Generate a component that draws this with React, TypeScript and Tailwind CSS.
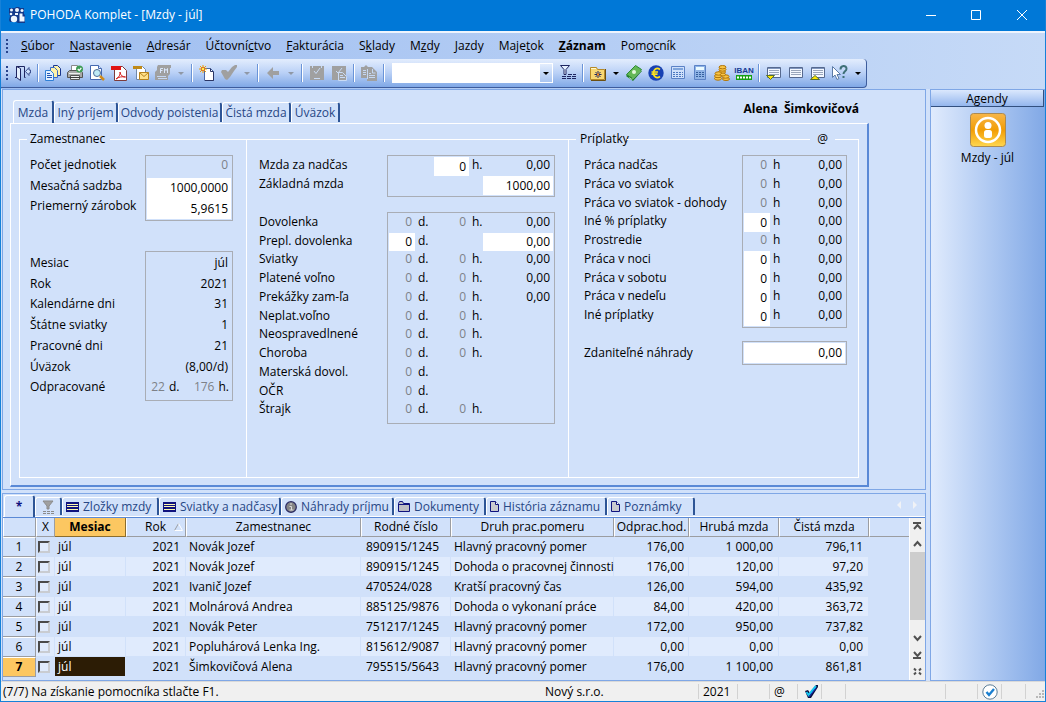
import { useState, type ReactNode } from "react";
import clsx from "clsx";

/* ---------- data ---------- */

const MENU = [
  { pre: "", key: "S", post: "úbor" },
  { pre: "", key: "N", post: "astavenie" },
  { pre: "", key: "A", post: "dresár" },
  { pre: "Účtovní", key: "c", post: "tvo" },
  { pre: "", key: "F", post: "akturácia" },
  { pre: "S", key: "k", post: "lady" },
  { pre: "M", key: "z", post: "dy" },
  { pre: "", key: "J", post: "azdy" },
  { pre: "Maje", key: "t", post: "ok" },
  { pre: "", key: "Z", post: "áznam", bold: true },
  { pre: "Pom", key: "o", post: "cník" },
];

const FORM_TABS = [
  { label: "Iný príjem", width: "w-[64px]" },
  { label: "Odvody poistenia", width: "w-[104px]" },
  { label: "Čistá mzda", width: "w-[69px]" },
  { label: "Úväzok", width: "w-[49px]" },
];

const MONTH_INFO = [
  ["Mesiac", "júl"],
  ["Rok", "2021"],
  ["Kalendárne dni", "31"],
  ["Štátne sviatky", "1"],
  ["Pracovné dni", "21"],
  ["Úväzok", "(8,00/d)"],
];

const ABSENCES = [
  { id: "dovolenka", label: "Dovolenka", hours: true, amount: true },
  { id: "prepl", label: "Prepl. dovolenka", editable: true, amount: true },
  { id: "sviatky", label: "Sviatky", hours: true, amount: true },
  { id: "platene", label: "Platené voľno", hours: true, amount: true },
  { id: "prekazky", label: "Prekážky zam-ľa", hours: true, amount: true },
  { id: "neplat", label: "Neplat.voľno", hours: true },
  { id: "neosprav", label: "Neospravedlnené", hours: true },
  { id: "choroba", label: "Choroba", hours: true },
  { id: "materska", label: "Materská dovol." },
  { id: "ocr", label: "OČR" },
  { id: "strajk", label: "Štrajk", hours: true },
];

const BONUSES = [
  { id: "nadcas", label: "Práca nadčas" },
  { id: "sviatok", label: "Práca vo sviatok" },
  { id: "dohody", label: "Práca vo sviatok - dohody" },
  { id: "percent", label: "Iné % príplatky", editable: true },
  { id: "prostredie", label: "Prostredie" },
  { id: "noc", label: "Práca v noci", editable: true },
  { id: "sobota", label: "Práca v sobotu", editable: true },
  { id: "nedela", label: "Práca v nedeľu", editable: true },
  { id: "ine", label: "Iné príplatky", editable: true },
];

const ROWS = [
  ["Novák Jozef", "890915/1245", "Hlavný pracovný pomer", "176,00", "1 000,00", "796,11"],
  ["Novák Jozef", "890915/1245", "Dohoda o pracovnej činnosti", "176,00", "120,00", "97,20"],
  ["Ivanič Jozef", "470524/028", "Kratší pracovný čas", "126,00", "594,00", "435,92"],
  ["Molnárová Andrea", "885125/9876", "Dohoda o vykonaní práce", "84,00", "420,00", "363,72"],
  ["Novák Peter", "751217/1245", "Hlavný pracovný pomer", "172,00", "950,00", "737,82"],
  ["Popluhárová Lenka Ing.", "815612/9087", "Hlavný pracovný pomer", "0,00", "0,00", "0,00"],
  ["Šimkovičová Alena", "795515/5643", "Hlavný pracovný pomer", "176,00", "1 100,00", "861,81"],
];

/* ---------- toolbar icons ---------- */

function Svg({ children }: { children: ReactNode }) {
  return (
    <svg width={16} height={16} viewBox="0 0 16 16" fill="none" aria-hidden="true" className="shrink-0">
      {children}
    </svg>
  );
}

const ExitIcon = () => (
  <Svg>
    <path d="M0 12.500h2M1.500 12.500v-11h8v11h1" stroke="#1e2560" />
    <path d="M1.500 1.500l4 2v12l-4-3z" fill="#e4effd" stroke="#1e2560" />
    <path d="M14 2.500L10.500 6.500l3.500 4v-2.500h1.500v-3H14z" fill="#cfe0fb" stroke="#3c5190" />
  </Svg>
);

const CopiesIcon = () => (
  <Svg>
    <path d="M8.500 .5h4l3 3v7h-7z" fill="#fff3a8" stroke="#17358f" />
    <path d="M5.500 2.500h4l3 3v7h-7z" fill="#fff3a8" stroke="#3b6ac8" />
    <path d="M.5 5.500h5l3 3v7h-8z" fill="#e3f1ff" stroke="#2f7fd6" />
    <path d="M2 8.500h3M2 10.500h5M2 12.500h5" stroke="#1f55b4" />
  </Svg>
);

const PrinterIcon = () => (
  <Svg>
    <path d="M4.500 .5h6v6h-6z" fill="#fff" stroke="#8a8a8a" />
    <path d="M2.500 5.500h11l2 2v5h-15v-5z" fill="#a9a9a9" stroke="#555" />
    <path d="M2 8.500h11" stroke="#efefef" />
    <path d="M3.500 10.500h9v4h-9z" fill="#ededed" stroke="#555" />
    <path d="M3 12.500h10" stroke="#3a3a3a" />
    <circle cx="12.500" cy="4" r="3.500" fill="#3f9c56" />
    <path d="M10.800 4l1.400 1.500L14.300 2.800" stroke="#fff" strokeWidth="1.200" />
  </Svg>
);

const PreviewIcon = () => (
  <Svg>
    <path d="M1.500 .5h8l3 3v11h-11z" fill="#fff" stroke="#4468b0" />
    <path d="M9.500 .5v3h3" fill="#dbe8ff" stroke="#4468b0" />
    <circle cx="8" cy="8" r="3.500" fill="#bfeaf5" stroke="#4b6b96" />
    <path d="M11 11l4 4" stroke="#d08c1c" strokeWidth="2.500" />
  </Svg>
);

const PdfIcon = () => (
  <Svg>
    <path d="M3.500 1.500h8l4 4v10h-12z" fill="#fff" stroke="#7d3b3b" />
    <path d="M0 1h10v4H0z" fill="#e01414" />
    <path d="M5 14c3-1.500 4.500-4.500 4-7 .5 3.500 2.500 5 5.500 5-3.500-.7-7 0-9.500 2z" stroke="#d42020" />
  </Svg>
);

const MailIcon = () => (
  <Svg>
    <path d="M3.500 1.500h6l3 3v10h-9z" fill="#fff" stroke="#7088a8" />
    <path d="M0 1h9v3H0z" fill="#c08a18" />
    <path d="M6.500 7.500h9v7h-9z" fill="#ffe08a" stroke="#b8831c" />
    <path d="M6.500 7.500l4.500 4 4.500-4" stroke="#b8831c" />
  </Svg>
);

const FmIcon = () => (
  <Svg>
    <path d="M3 0h13v3h-1v6l-2 2v4H0V7l2-2V2z" fill="#a0a0a0" />
    <path d="M5.500 8V3.500H8M5.500 5.500h2M9.500 8V3.500l1.500 2 1.500-2V8" stroke="#d9e6fa" />
    <path d="M2 11.500h9M3 13.500h9" stroke="#c5d7f2" />
  </Svg>
);

const NewIcon = () => (
  <Svg>
    <path d="M5.500 3.500h6l3 3v9h-9z" fill="#fff" stroke="#4a68a8" />
    <path d="M11.500 3.500v3h3M14.500 7v8.500H6" stroke="#2b3563" />
    <path d="M4 0v8M0 4h8M1 1l6 6M7 1L1 7" stroke="#f0a000" />
    <circle cx="4" cy="4" r="1.700" fill="#fff04d" stroke="#d43a10" strokeWidth=".6" />
  </Svg>
);

const CheckIcon = () => (
  <Svg>
    <path d="M0 7l1-2h4l2 2 4-5 3-2h2v2l-3 4-4 6-3 3-2-1z" fill="#a0a0a0" />
  </Svg>
);

const BackIcon = () => (
  <Svg>
    <path d="M8 2v4h6v4H8v4L2 8z" fill="#a0a0a0" />
  </Svg>
);

const SaveIcon = () => (
  <Svg>
    <path d="M1 1h14v14H1z" fill="#a0a0a0" />
    <path d="M3.500 1v2M12.500 1v2" stroke="#c9dbf5" />
    <path d="M5 6l2 2.500L11 3M5 13.500h6" stroke="#c9dbf5" />
  </Svg>
);

const SaveCopyIcon = () => (
  <Svg>
    <path d="M1 1h14v14H1z" fill="#a0a0a0" />
    <path d="M5 6l2 2L11 3" stroke="#c9dbf5" />
    <path d="M7.500 7.500h4l4 4v4h-8z" fill="#a0a0a0" stroke="#c9dbf5" />
    <path d="M9 10.500h3M9 12.500h5" stroke="#c9dbf5" />
  </Svg>
);

const PasteIcon = () => (
  <Svg>
    <path d="M0 2h3l2-2 2 2h4l5 5v9H6v-3H0z" fill="#a0a0a0" />
    <path d="M2 5.500h3M2 7.500h3M2 9.500h3M8 8.500h2M8 10.500h6M8 12.500h6" stroke="#c5d7f2" />
    <path d="M6.500 4v10M11.500 4v4h3" stroke="#c5d7f2" />
  </Svg>
);

const FilterIcon = ({ gray }: { gray?: boolean }) => (
  <Svg>
    <path
      d={gray ? "M3 2h10L9 7v3H7V7z" : "M0.500 .5h9l-3.500 4v5h-2v-5z"}
      fill={gray ? "#a0a0a0" : "#e6f0ff"}
      stroke={gray ? "#8b8b8b" : "#1e2560"}
    />
    {gray ? (
      <path d="M3 12.500h11M3 14.500h11" stroke="#8b8b8b" strokeDasharray="3 1" />
    ) : (
      <path d="M8 9.500h8M2 11.500h14M2 13.500h14" stroke="#1e2560" strokeDasharray="4 1" />
    )}
  </Svg>
);

const FolderStarIcon = () => (
  <Svg>
    <path d="M0.500 2.500h6l1 2h7v10h-14z" fill="#f8d873" stroke="#b58a2a" />
    <path d="M1 3.500h5" stroke="#fff8cf" />
    <path d="M15.500 4v11.500H1" stroke="#6b4f12" />
    <path d="M8 6v7M4.500 9.500h7M5.500 7l5 5M10.500 7l-5 5" stroke="#1e2560" />
    <path d="M7 8.500h2v2H7z" fill="#ff8c1a" />
  </Svg>
);

const MoneyIcon = () => (
  <Svg>
    <path d="M0 11l9-10 7 5-9 10z" fill="#1d7d27" />
    <path d="M.5 9.500l9-9 6 4-9 9z" fill="#63b855" stroke="#2c8a34" />
    <circle cx="8" cy="7" r="2" fill="#e4f8dc" />
    <path d="M3 12.500l3 2 9-9" stroke="#a8dd9c" />
  </Svg>
);

const EuroIcon = () => (
  <Svg>
    <circle cx="8" cy="8" r="7.700" fill="#1740b4" />
    <path d="M12 4.500C8.500 2 5.500 4.500 5.500 8s3 6 6.500 3.500M3.500 7h6.500M3.500 9.200h6" stroke="#ffe21f" strokeWidth="1.700" />
  </Svg>
);

const CalculatorIcon = ({ full }: { full?: boolean }) => (
  <Svg>
    <path
      d={full ? "M2.500 .5h11v14h-11z" : "M1.500 1.500h13v12h-13z"}
      fill={full ? "#8fb3e6" : "#cfe0fb"}
      stroke="#5b82c6"
    />
    {full ? <path d="M4 2h8v3H4z" fill="#eafaff" /> : <path d="M3 3h10v2H3z" fill="#7fa5dc" />}
    <path
      d={full ? "M4 7.500h8M4 9.500h8M4 11.500h8" : "M3 7.500h10M3 9.500h10M3 11.500h10"}
      stroke={full ? "#35609f" : "#4c78bf"}
      strokeDasharray="2 1"
    />
  </Svg>
);

const CoinsIcon = () => (
  <Svg>
    <g fill="#f9c545" stroke="#b07408">
      <ellipse cx="8" cy="7" rx="3.500" ry="1.700" />
      <ellipse cx="8.500" cy="4.500" rx="3.500" ry="1.700" />
      <ellipse cx="8.500" cy="2.200" rx="3.500" ry="1.700" />
      <ellipse cx="4" cy="13.500" rx="3.500" ry="1.700" />
      <ellipse cx="4" cy="11" rx="3.500" ry="1.700" />
      <ellipse cx="4.500" cy="8.500" rx="3.500" ry="1.700" />
      <ellipse cx="12" cy="14" rx="3.500" ry="1.500" />
      <ellipse cx="11.500" cy="11.500" rx="3.500" ry="1.700" />
      <ellipse cx="9" cy="9.500" rx="2.500" ry="1.500" />
    </g>
  </Svg>
);

const IbanIcon = () => (
  <span className="flex flex-col items-center">
    <span className="font-['Liberation_Sans',sans-serif] text-[8px] leading-[8px] font-bold text-[#173a94]">IBAN</span>
    <svg width="16" height="5" viewBox="0 0 16 5" aria-hidden="true">
      <path d="M0 0h16v5H0z" fill="#14a014" />
      <path d="M1 2.500h14" stroke="#fff" strokeWidth="2" strokeDasharray="2 1" />
    </svg>
  </span>
);

const ListIcon = ({ arrow }: { arrow?: "down" | "up" }) => (
  <Svg>
    <path d="M1.500 2.500h13v10h-13z" fill="#f4f8ff" stroke="#56698f" />
    <path d="M2 3.500h12" stroke="#7f95bd" />
    <path d="M3 5.500h10M3 7.500h10M3 9.500h10" stroke="#9aa6bb" />
    {arrow === "down" && <path d="M0.500 10.500h8l-4 4z" fill="#ffe600" stroke="#55702b" />}
    {arrow === "up" && <path d="M0.500 14.500h9l-4.500-4z" fill="#ffe600" stroke="#55702b" />}
  </Svg>
);

const HelpIcon = () => (
  <Svg>
    <path d="M0.500 1.500v11l2.500-2.500 2 4.500 2-1-2-4h3.500z" fill="#fff" stroke="#5c7ba6" />
    <path d="M8.500 4.500c0-4.500 6-4.500 6-.8 0 2.500-3 2.800-3 5.300" stroke="#3f7077" strokeWidth="2" />
    <path d="M10.500 11h2v2h-2z" fill="#3f7077" />
  </Svg>
);

/* ---------- toolbar parts ---------- */

function Tool({ label, children }: { label: string; children: ReactNode }) {
  return (
    <button type="button" aria-label={label} className="flex h-[22px] w-[22px] shrink-0 items-center justify-center">
      {children}
    </button>
  );
}

function Caret({ muted }: { muted?: boolean }) {
  return (
    <button type="button" aria-label="Viac" className="flex h-[22px] w-[14px] shrink-0 items-center justify-center">
      <svg width="6" height="3" viewBox="0 0 6 3" fill={muted ? "#8f98a6" : "#000"} aria-hidden="true">
        <path d="M0 0h6L3 3z" />
      </svg>
    </button>
  );
}

function Separator() {
  return <span className="mx-[3px] h-[18px] w-[2px] shrink-0 border-l border-[#6a94d8] bg-white" />;
}

function Grip() {
  return (
    <span className="flex flex-col gap-[2px]">
      {[0, 1, 2, 3].map((i) => (
        <span key={i} className="size-[2px] bg-[#27438c]" />
      ))}
    </span>
  );
}

function Toolbar() {
  return (
    <div className="flex h-[29px] w-[866px] shrink-0 items-center rounded-r-sm border-r border-b border-[#3d5c9c] bg-linear-to-b from-[#e3edfd] via-[#b9d0f6] to-[#80a8e6] pl-[5px]">
      <Grip />
      <span className="w-[4px]" />
      <Tool label="Koniec"><ExitIcon /></Tool>
      <Separator />
      <Tool label="Kopírovať"><CopiesIcon /></Tool>
      <Tool label="Tlač"><PrinterIcon /></Tool>
      <Tool label="Náhľad"><PreviewIcon /></Tool>
      <Tool label="PDF"><PdfIcon /></Tool>
      <Tool label="Odoslať"><MailIcon /></Tool>
      <Tool label="Fiškálny modul"><FmIcon /></Tool>
      <Caret muted />
      <Separator />
      <Tool label="Nový záznam"><NewIcon /></Tool>
      <Tool label="Označiť"><CheckIcon /></Tool>
      <Caret muted />
      <Separator />
      <Tool label="Späť"><BackIcon /></Tool>
      <Caret muted />
      <Separator />
      <Tool label="Uložiť"><SaveIcon /></Tool>
      <Tool label="Uložiť kópiu"><SaveCopyIcon /></Tool>
      <Separator />
      <Tool label="Vložiť"><PasteIcon /></Tool>
      <Separator />
      <select
        aria-label="Hľadať"
        className="mr-[3px] ml-[4px] h-[20px] w-[148px] shrink-0 appearance-none border border-white bg-white"
      />
      <span className="-ml-[4px] flex h-[20px] w-[14px] shrink-0 items-center justify-center border border-white bg-linear-to-b from-[#e3edfd] to-[#a9c5f1]">
        <svg width="6" height="3" viewBox="0 0 6 3" aria-hidden="true">
          <path d="M0 0h6L3 3z" />
        </svg>
      </span>
      <span className="w-[4px]" />
      <Tool label="Filter"><FilterIcon /></Tool>
      <Separator />
      <Tool label="Obľúbené"><FolderStarIcon /></Tool>
      <Caret />
      <Tool label="Platby"><MoneyIcon /></Tool>
      <Tool label="Kurzy"><EuroIcon /></Tool>
      <Tool label="Kalendár"><CalculatorIcon /></Tool>
      <Tool label="Kalkulačka"><CalculatorIcon full /></Tool>
      <Tool label="Mince"><CoinsIcon /></Tool>
      <Tool label="IBAN"><IbanIcon /></Tool>
      <Separator />
      <Tool label="Dole"><ListIcon arrow="down" /></Tool>
      <Tool label="Zoznam"><ListIcon /></Tool>
      <Tool label="Hore"><ListIcon arrow="up" /></Tool>
      <Tool label="Pomocník"><HelpIcon /></Tool>
      <Caret />
    </div>
  );
}

/* ---------- form parts ---------- */

function Value({ children, muted }: { children?: ReactNode; muted?: boolean }) {
  return <span className={clsx("pr-[3px] text-right", muted && "text-[#7d8188]")}>{children}</span>;
}

function Field({ id, value, label }: { id: string; value: string; label?: string }) {
  return (
    <input
      id={id}
      aria-label={label}
      defaultValue={value}
      className="h-full w-full min-w-0 bg-white pr-[3px] pb-px text-right leading-4 outline-none"
    />
  );
}

const labelsClass = "grid flex-1 auto-rows-fr leading-4";
const boxClass = "grid auto-rows-fr border border-[#a9adb5] leading-4";
const hourRow = "grid grid-cols-[26px_19px_35px_14px_70px]";

function EmployeeColumn() {
  return (
    <div className="w-[226px] shrink-0 pt-4 pr-[13px] pl-[10px]">
      <div className="flex h-[66px]">
        <div className={clsx(labelsClass, "py-[2px]")}>
          <span>Počet jednotiek</span>
          <label htmlFor="sadzba">Mesačná sadzba</label>
          <label htmlFor="zarobok">Priemerný zárobok</label>
        </div>
        <div className={clsx(boxClass, "w-[88px] p-px")}>
          <Value muted>0</Value>
          <Field id="sadzba" value="1000,0000" />
          <Field id="zarobok" value="5,9615" />
        </div>
      </div>

      <div className="mt-[30px] flex h-[150px]">
        <div className={clsx(labelsClass, "pt-[4px] pb-px")}>
          {MONTH_INFO.map(([label]) => (
            <span key={label}>{label}</span>
          ))}
          <span>Odpracované</span>
        </div>
        <div className={clsx(boxClass, "w-[88px] px-px pt-[3px]")}>
          {MONTH_INFO.map(([label, value]) => (
            <Value key={label}>{value}</Value>
          ))}
          <span className="flex justify-end pr-[2px]">
            <span className="text-[#7d8188]">22</span>
            <span className="w-[29px] pl-1">d.</span>
            <span className="text-[#7d8188]">176</span>
            <span className="pl-1">h.</span>
          </span>
        </div>
      </div>
    </div>
  );
}

function WageColumn() {
  return (
    <div className="w-[322px] shrink-0 border-l border-white pt-4 pr-[13px] pl-[12px]">
      <div className="flex h-[42px]">
        <div className={clsx(labelsClass, "py-[2px]")}>
          <label htmlFor="nadcas-h">Mzda za nadčas</label>
          <label htmlFor="zakladna">Základná mzda</label>
        </div>
        <div className={clsx(boxClass, "p-px")}>
          <div className={hourRow}>
            <span />
            <span />
            <Field id="nadcas-h" value="0" />
            <span className="pl-[3px]">h.</span>
            <Value>0,00</Value>
          </div>
          <div className={hourRow}>
            <span className="col-span-4" />
            <Field id="zakladna" value="1000,00" />
          </div>
        </div>
      </div>

      <div className="mt-[15px] flex h-[212px]">
        <div className={clsx(labelsClass, "pt-[2px] pb-[4px]")}>
          {ABSENCES.map((a) =>
            a.editable ? (
              <label key={a.id} htmlFor={`${a.id}-d`}>{a.label}</label>
            ) : (
              <span key={a.id}>{a.label}</span>
            ),
          )}
        </div>
        <div className={clsx(boxClass, "px-px pt-px pb-[3px]")}>
          {ABSENCES.map((a) => (
            <div key={a.id} className={hourRow}>
              {a.editable ? <Field id={`${a.id}-d`} value="0" /> : <Value muted>0</Value>}
              <span className="pl-[3px]">d.</span>
              <Value muted>{a.hours && "0"}</Value>
              <span className="pl-[3px]">{a.hours && "h."}</span>
              {a.editable ? (
                <Field id={`${a.id}-suma`} label={`${a.label} suma`} value="0,00" />
              ) : (
                <Value>{a.amount && "0,00"}</Value>
              )}
            </div>
          ))}
        </div>
      </div>
    </div>
  );
}

function BonusColumn() {
  return (
    <div className="flex-1 border-l border-white pt-4 pr-[11px] pl-[15px]">
      <div className="flex h-[173px]">
        <div className={clsx(labelsClass, "py-[2px]")}>
          {BONUSES.map((b) =>
            b.editable ? (
              <label key={b.id} htmlFor={`pr-${b.id}`}>{b.label}</label>
            ) : (
              <span key={b.id}>{b.label}</span>
            ),
          )}
        </div>
        <div className={clsx(boxClass, "p-px")}>
          {BONUSES.map((b) => (
            <div key={b.id} className="grid grid-cols-[26px_20px_55px]">
              {b.editable ? <Field id={`pr-${b.id}`} value="0" /> : <Value muted>0</Value>}
              <span className="pl-[3px]">h</span>
              <Value>0,00</Value>
            </div>
          ))}
        </div>
      </div>

      <div className="mt-[13px] flex h-[24px] items-center">
        <label htmlFor="nahrady" className="flex-1 leading-4">Zdaniteľné náhrady</label>
        <div className={clsx(boxClass, "h-full w-[105px] p-px")}>
          <Field id="nahrady" value="0,00" />
        </div>
      </div>
    </div>
  );
}

const tabClass = "rounded-t-[3px] border-t border-r-2 border-l border-t-white border-r-[#2e5596] border-l-white";

function FormPanel() {
  return (
    <section className="flex flex-1 flex-col border border-[#7fa7e6] pt-[9px] pr-[56px] pb-[2px] pl-[7px]">
      <div className="flex h-[24px] items-end text-[#274785]">
        <button type="button" className={clsx(tabClass, "-mb-px ml-[3px] h-[24px] w-[41px] bg-[#d1e1fa]")}>
          Mzda
        </button>
        {FORM_TABS.map((t) => (
          <button key={t.label} type="button" className={clsx(tabClass, "mb-px h-[20px] whitespace-nowrap", t.width)}>
            {t.label}
          </button>
        ))}
        <h1 className="mt-[2px] mr-[10px] ml-auto self-start font-bold whitespace-pre text-black">Alena  Šimkovičová</h1>
      </div>

      <div className="flex flex-1 flex-col border-t border-r-2 border-b-2 border-l border-t-white border-r-[#5a89d6] border-b-[#5a89d6] border-l-white px-[8px] pt-[7px] pb-[7px]">
        <div className="flex h-4 items-center leading-4">
          <span className="mr-[3px] h-px w-[8px] bg-white" />
          <span className="w-[80px]">Zamestnanec</span>
          <span className="h-px w-[466px] bg-white" />
          <span className="w-[51px] pl-[4px]">Príplatky</span>
          <span className="h-px flex-1 bg-white" />
          <span className="px-[7px]">@</span>
          <span className="h-px w-[24px] bg-white" />
        </div>
        <div className="-mt-2 flex flex-1 border-x border-b border-white">
          <EmployeeColumn />
          <WageColumn />
          <BonusColumn />
        </div>
      </div>
    </section>
  );
}

/* ---------- records table ---------- */

const ListGlyph = () => (
  <svg width="13" height="10" viewBox="0 0 13 10" className="shrink-0" shapeRendering="crispEdges" aria-hidden="true">
    <path d="M0 0h13v10H0z" fill="#10137e" />
    <path d="M1 2h11v1H1zM1 4h11v1H1zM1 7h11v1H1z" fill="#fff9b0" />
  </svg>
);

const InfoGlyph = () => (
  <svg width="12" height="12" viewBox="0 0 12 12" className="shrink-0" aria-hidden="true">
    <circle cx="6" cy="6" r="5.300" fill="#858585" stroke="#2b2b62" strokeWidth="1.200" />
    <path d="M5 3h2M4.500 5.500H6.500V9M4.500 9h4" stroke="#ddd" fill="none" />
  </svg>
);

const FolderGlyph = () => (
  <svg width="12" height="11" viewBox="0 0 12 11" className="shrink-0" aria-hidden="true">
    <path d="M.5 10.500v-8l1-2h3l1 2h6v8z" fill="#bdbdc4" stroke="#10137e" />
    <path d="M1 3.500h10" stroke="#10137e" />
  </svg>
);

const PageGlyph = () => (
  <svg width="9" height="11" viewBox="0 0 9 11" className="shrink-0" aria-hidden="true">
    <path d="M.5 .5h5l3 3v7h-8z" fill="#c9c9cf" stroke="#10137e" />
    <path d="M5.500 .5v3h3" fill="#fff" stroke="#10137e" />
  </svg>
);

const DETAIL_TABS = [
  { label: "Zložky mzdy", icon: <ListGlyph />, width: "w-[97px]" },
  { label: "Sviatky a nadčasy", icon: <ListGlyph />, width: "w-[122px]" },
  { label: "Náhrady príjmu", icon: <InfoGlyph />, width: "w-[113px]" },
  { label: "Dokumenty", icon: <FolderGlyph />, width: "w-[92px]" },
  { label: "História záznamu", icon: <PageGlyph />, width: "w-[121px]" },
  { label: "Poznámky", icon: <PageGlyph />, width: "w-[88px]" },
];

const thClass = "h-[19px] border-r border-b border-l border-r-[#9b9da1] border-b-[#9b9da1] border-l-white p-0 font-normal";
const tdClass = "h-[20px] border-r border-b border-[#d1e1fa] p-0 whitespace-nowrap";

function RecordsTable() {
  const [selected, setSelected] = useState(6);

  return (
    <table className="w-full table-fixed border-separate border-spacing-0 leading-4">
      <colgroup>
        <col className="w-[33px]" />
        <col className="w-[19px]" />
        <col className="w-[71px]" />
        <col className="w-[60px]" />
        <col className="w-[175px]" />
        <col className="w-[90px]" />
        <col className="w-[163px]" />
        <col className="w-[75px]" />
        <col className="w-[90px]" />
        <col className="w-[90px]" />
        <col />
      </colgroup>
      <thead>
        <tr>
          <th className={thClass} />
          <th className={thClass}>X</th>
          <th className="h-[19px] border-r border-b border-[#8c6d2c] bg-[#fcc761] p-0">Mesiac</th>
          <th className={thClass}>
            <span className="flex items-center justify-end gap-[8px] pr-[2px]">
              Rok
              <svg width="9" height="8" viewBox="0 0 9 8" fill="none" aria-hidden="true">
                <path d="M.5 7.500L4.500 .5" stroke="#9b9da1" />
                <path d="M4.500 .5l4 7h-8" stroke="#fff" />
              </svg>
            </span>
          </th>
          <th className={thClass}>Zamestnanec</th>
          <th className={thClass}>Rodné číslo</th>
          <th className={thClass}>Druh prac.pomeru</th>
          <th className={thClass}>Odprac.hod.</th>
          <th className={thClass}>Hrubá mzda</th>
          <th className={thClass}>Čistá mzda</th>
          <th className="border-b border-l border-b-[#9b9da1] border-l-white p-0" />
        </tr>
      </thead>
      <tbody>
        {ROWS.map(([name, birthNo, kind, hours, gross, net], i) => (
          <tr key={i} onClick={() => setSelected(i)} className={i % 2 ? "bg-[#e0ebfd]" : "bg-[#d1e1fa]"}>
            <th
              scope="row"
              className={clsx(
                "h-[20px] border-t border-r border-b border-t-white border-r-[#9b9da1] border-b-[#9b9da1] p-0",
                i === selected ? "bg-[#fcc761] font-bold" : "bg-[#d1e1fa] font-normal",
              )}
            >
              {i + 1}
            </th>
            <td className={tdClass}>
              <input
                type="checkbox"
                aria-label={`Označiť riadok ${i + 1}`}
                className="ml-[2px] block size-[12px] appearance-none border-2 border-t-[#4a4a4a] border-r-[#c9ccd1] border-b-[#c9ccd1] border-l-[#4a4a4a] bg-[#e0ebfd]"
              />
            </td>
            <td className={clsx(tdClass, "pl-[3px]", i === selected && "bg-[#2c1c05] text-white")}>júl</td>
            <td className={clsx(tdClass, "pr-[5px] text-right")}>2021</td>
            <td className={clsx(tdClass, "pl-[3px]")}>{name}</td>
            <td className={clsx(tdClass, "pl-[5px]")}>{birthNo}</td>
            <td className={clsx(tdClass, "pl-[3px]")}>{kind}</td>
            <td className={clsx(tdClass, "pr-[4px] text-right")}>{hours}</td>
            <td className={clsx(tdClass, "pr-[5px] text-right")}>{gross}</td>
            <td className={clsx(tdClass, "pr-[5px] text-right")}>{net}</td>
            <td className="bg-[#d1e1fa]" />
          </tr>
        ))}
      </tbody>
    </table>
  );
}

function Scrollbar() {
  return (
    <div className="flex w-[16px] shrink-0 flex-col items-center border-l border-white bg-[#f0f0f0]">
      <svg width="15" height="34" viewBox="0 0 15 34" fill="none" stroke="#505050" strokeWidth="2" aria-hidden="true">
        <path d="M3 5h8M4 11l3.500-4 3.500 4M4 28l3.500-4 3.500 4" />
      </svg>
      <span className="h-[68px] w-full bg-[#cdcdcd]" />
      <svg width="15" height="60" viewBox="0 0 15 60" fill="none" stroke="#505050" strokeWidth="2" aria-hidden="true">
        <path d="M4 16l3.500 4 3.500-4M4 32l3.500 4 3.500-4M3 38h8" />
        <path d="M4 48.500l2 2m3 0l2-2M4 54.500l2-2m3 0l2 2" />
      </svg>
    </div>
  );
}

function RecordsPanel() {
  return (
    <section className="border border-[#7fa7e6]">
      <div className="flex h-[24px] items-start border-b border-[#5a89d6] pt-px pl-px text-[#274785] shadow-[inset_0_-1px_#fff]">
        <button
          type="button"
          aria-label="Všetko"
          className={clsx(tabClass, "h-[22px] w-[31px] bg-[#d1e1fa] font-bold text-[#10137e]")}
        >
          *
        </button>
        <div className="flex pt-[2px]">
          <button
            type="button"
            aria-label="Filter"
            className={clsx(tabClass, "flex h-[18px] w-[27px] items-center justify-center")}
          >
            <FilterIcon gray />
          </button>
          {DETAIL_TABS.map((t) => (
            <button
              key={t.label}
              type="button"
              className={clsx(tabClass, "flex h-[18px] items-center gap-[4px] pl-[3px] whitespace-nowrap", t.width)}
            >
              {t.icon}
              {t.label}
            </button>
          ))}
        </div>
        <span className="mt-[6px] mr-[8px] ml-auto flex gap-[12px]">
          <svg width="4" height="8" viewBox="0 0 4 8" fill="#f0f2f6" aria-hidden="true">
            <path d="M4 0v8L0 4z" />
          </svg>
          <svg width="4" height="8" viewBox="0 0 4 8" fill="#f0f2f6" aria-hidden="true">
            <path d="M0 0v8l4-4z" />
          </svg>
        </span>
      </div>
      <div className="flex">
        <div className="min-w-0 flex-1 pb-[3px]">
          <RecordsTable />
        </div>
        <Scrollbar />
      </div>
    </section>
  );
}

/* ---------- window ---------- */

function TitleBar() {
  return (
    <header className="flex h-[31px] items-center bg-[#0078d7] pb-px pl-[8px] text-white">
      <svg width="16" height="16" viewBox="0 0 16 16" aria-hidden="true">
        <path d="M0 1h6l1-1h3l1 1h4v6l1 1v8H9l-2-1H1l-1-2 1-4-1-2z" fill="#123a8c" />
        <g fill="#eef6ff">
          <circle cx="2.500" cy="3" r="1.500" />
          <circle cx="2" cy="7" r="1.300" />
          <circle cx="8" cy="3" r="2" />
          <circle cx="13" cy="3.500" r="1.500" />
          <circle cx="5" cy="12" r="3.200" />
          <path d="M6 6h3v2H6zM10.500 6.500h3v3h2v5h-5z" />
        </g>
      </svg>
      <span className="flex-1 pl-[5px]">POHODA Komplet - [Mzdy - júl]</span>
      <button type="button" aria-label="Minimalizovať" className="flex h-full w-[45px] items-center justify-center">
        <svg width="10" height="10" viewBox="0 0 10 10" stroke="#fff" aria-hidden="true"><path d="M0 5.500h10" /></svg>
      </button>
      <button type="button" aria-label="Maximalizovať" className="flex h-full w-[45px] items-center justify-center">
        <svg width="10" height="10" viewBox="0 0 10 10" fill="none" stroke="#fff" aria-hidden="true"><path d="M.5 .5h9v9h-9z" /></svg>
      </button>
      <button type="button" aria-label="Zavrieť" className="flex h-full w-[47px] items-center justify-center">
        <svg width="10" height="10" viewBox="0 0 10 10" stroke="#fff" aria-hidden="true"><path d="M0 0l10 10M10 0L0 10" /></svg>
      </button>
    </header>
  );
}

function AgendaPanel() {
  return (
    <aside className="flex w-[115px] shrink-0 flex-col border border-[#7fa7e6] bg-linear-to-r from-[#e0ebfd] to-[#82a9e6]">
      <h2 className="h-[17px] border-r border-b border-[#33507f] bg-linear-to-b from-[#dbe8fd] to-[#94b6ed] text-center leading-[17px]">
        Agendy
      </h2>
      <button type="button" className="mt-[6px] flex flex-col items-center">
        <svg width="36" height="34" viewBox="0 0 36 34" aria-hidden="true">
          <defs>
            <linearGradient id="tile" x1="0" y1="0" x2="0" y2="1">
              <stop offset="0" stopColor="#f7b64a" />
              <stop offset=".5" stopColor="#f29d05" />
              <stop offset="1" stopColor="#ffd750" />
            </linearGradient>
          </defs>
          <rect x=".5" y=".5" width="35" height="33" rx="3" fill="url(#tile)" stroke="#ab8a52" />
          <circle cx="18" cy="17" r="12" fill="none" stroke="#fff" strokeWidth="2.500" />
          <circle cx="18" cy="12.500" r="3.500" fill="#fff" />
          <rect x="14" y="17" width="8" height="8" rx="2.500" fill="#fff" />
        </svg>
        <span className="mt-[3px] leading-4">Mzdy - júl</span>
      </button>
    </aside>
  );
}

function StatusBar() {
  const cell = "flex h-full shrink-0 items-center border-l border-[#d2d2d2]";
  return (
    <footer className="flex h-[20px] items-center border-t border-[#d9d9d9] bg-[#f0f0f0] py-[2px]">
      <span className="w-[541px] pl-[2px]">(7/7) Na získanie pomocníka stlačte F1.</span>
      <span className="flex-1 pl-[3px]">Nový s.r.o.</span>
      <span className={clsx(cell, "w-[39px] pl-[4px]")}>2021</span>
      <span className={clsx(cell, "w-[32px]")} />
      <span className={clsx(cell, "w-[28px] pl-[4px]")}>@</span>
      <span className={clsx(cell, "w-[24px] pl-[7px]")}>
        <svg width="13" height="13" viewBox="0 0 13 13" aria-hidden="true">
          <path d="M0 6l3-1 2 3 6-8h2v2L6 13H3z" fill="#0c1040" />
          <path d="M1.500 7l2 3L11 1" stroke="#16c3ee" strokeWidth="2" fill="none" />
          <path d="M4 12l7-9" stroke="#1631c4" fill="none" />
        </svg>
      </span>
      <span className={clsx(cell, "w-[24px]")} />
      <span className={clsx(cell, "w-[100px]")} />
      <span className={clsx(cell, "w-[32px]")} />
      <span className={clsx(cell, "w-[24px] pl-[4px]")}>
        <svg width="16" height="16" viewBox="0 0 16 16" fill="none" className="shrink-0" aria-hidden="true">
          <circle cx="8" cy="8" r="7.200" fill="#fff" stroke="#5b7d97" />
          <path d="M4.500 8l2.500 3 5-6" stroke="#1a7fd0" strokeWidth="2.400" />
        </svg>
      </span>
      <span className={clsx(cell, "w-[24px]")} />
      <span className={clsx(cell, "w-[20px] items-end justify-end")}>
        <svg width="9" height="9" viewBox="0 0 9 9" fill="#b8b8b8" aria-hidden="true">
          <path d="M6 0h2v2H6zM3 3h2v2H3zM6 3h2v2H6zM0 6h2v2H0zM3 6h2v2H3zM6 6h2v2H6z" />
        </svg>
      </span>
    </footer>
  );
}

export default function App() {
  return (
    <div className="flex min-h-screen flex-col border border-t-0 border-[#1681d8] bg-[#d1e1fa] font-['Open_Sans','Noto_Sans',sans-serif] text-[12px] leading-4 text-black">
      <TitleBar />
      <div className="border-t-2 border-[#eef4fd] bg-linear-to-r from-[#9ebdf0] to-[#c6daf7] pb-px">
        <nav className="flex h-[26px] items-center pl-[5px]">
          <Grip />
          <div className="flex gap-[15px] pl-[13px]">
            {MENU.map((m) => (
              <button key={m.pre + m.key + m.post} type="button" className={clsx(m.bold && "font-bold")}>
                {m.pre}
                <u>{m.key}</u>
                {m.post}
              </button>
            ))}
          </div>
        </nav>
        <Toolbar />
      </div>
      <main className="flex flex-1 gap-[4px] pl-px">
        <div className="flex min-w-0 flex-1 flex-col gap-[3px]">
          <FormPanel />
          <RecordsPanel />
        </div>
        <AgendaPanel />
      </main>
      <StatusBar />
    </div>
  );
}
